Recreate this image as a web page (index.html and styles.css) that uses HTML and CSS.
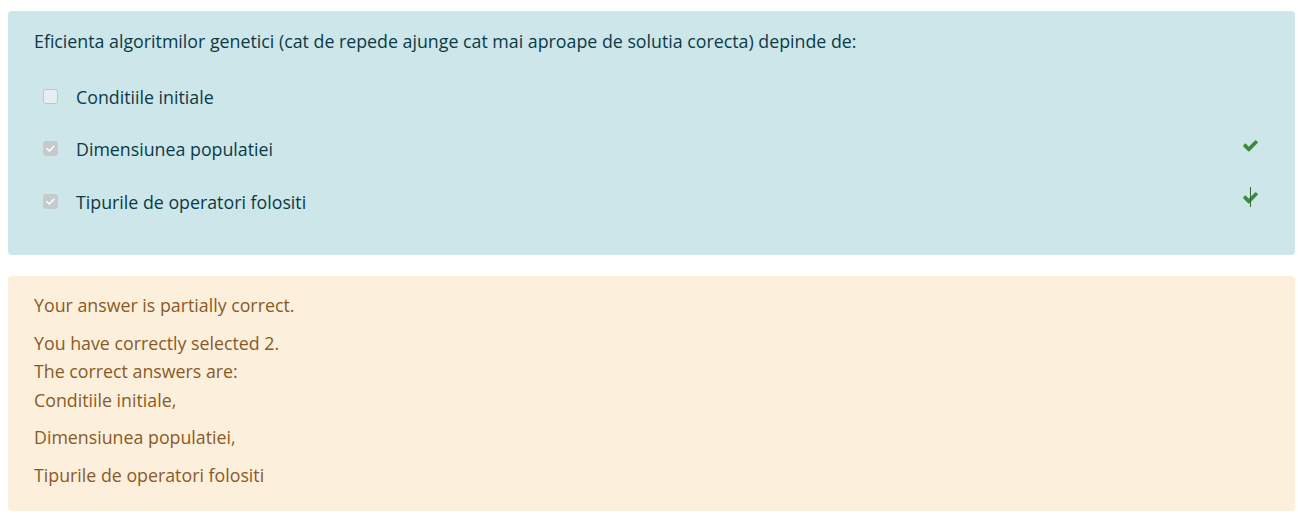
FILE: index.html
```html
<!DOCTYPE html>
<html lang="ro">
<head>
<meta charset="utf-8">
<title>Quiz review</title>
<link rel="stylesheet" href="styles.css">
</head>
<body>
<div class="page">
  <div class="formulation">
    <div class="qtext">Eficienta algoritmilor genetici (cat de repede ajunge cat mai aproape de solutia corecta) depinde de:</div>
    <div class="answers">
      <div class="row">
        <span class="cb"></span>
        <label>Conditiile initiale</label>
      </div>
      <div class="row">
        <span class="cb checked"><svg viewBox="0 0 16 16" width="15" height="15"><path d="M3.8 8.3 L6.6 11 L12.2 5.2" fill="none" stroke="#fff" stroke-width="1.9" stroke-linecap="round" stroke-linejoin="round"/></svg></span>
        <label>Dimensiunea populatiei</label>
        <span class="mark"><svg viewBox="0 0 1792 1792" width="17" height="17"><path fill="currentColor" d="M1671 566q0 40-28 68l-724 724-136 136q-28 28-68 28t-68-28l-136-136-362-362q-28-28-28-68t28-68l136-136q28-28 68-28t68 28l294 295 656-657q28-28 68-28t68 28l136 136q28 28 28 68z"/></svg></span>
      </div>
      <div class="row">
        <span class="cb checked"><svg viewBox="0 0 16 16" width="15" height="15"><path d="M3.8 8.3 L6.6 11 L12.2 5.2" fill="none" stroke="#fff" stroke-width="1.9" stroke-linecap="round" stroke-linejoin="round"/></svg></span>
        <label>Tipurile de operatori folositi</label>
        <span class="mark"><svg viewBox="0 0 1792 1792" width="17" height="17"><path fill="currentColor" d="M1671 566q0 40-28 68l-724 724-136 136q-28 28-68 28t-68-28l-136-136-362-362q-28-28-28-68t28-68l136-136q28-28 68-28t68 28l294 295 656-657q28-28 68-28t68 28l136 136q28 28 28 68z"/></svg><span class="cursor"></span></span>
      </div>
    </div>
  </div>
  <div class="outcome">
    <p>Your answer is partially correct.</p>
    <p>You have correctly selected 2.<br>The correct answers are:<br>Conditiile initiale,</p>
    <p>Dimensiunea populatiei,</p>
    <p>Tipurile de operatori folositi</p>
  </div>
</div>
</body>
</html>
```

FILE: styles.css
```css
html, body {
  margin: 0;
  padding: 0;
  background: #ffffff;
}
body {
  font-family: "Open Sans", "Noto Sans", sans-serif;
  font-size: 17.8px;
  line-height: 28.5px;
}
.page {
  padding: 11px 3px 0 8px;
  display: flex;
  flex-direction: column;
  gap: 21px;
}
.formulation {
  background: #cde6ea;
  color: #0b3a47;
  border-radius: 4px;
  padding: 16px 36px 27px 26px;
}
.qtext {
  margin-bottom: 15px;
}
.answers {
  display: flex;
  flex-direction: column;
}
.row {
  height: 52.5px;
  display: flex;
  align-items: center;
  padding-left: 9px;
}
.cb {
  flex: none;
  width: 15px;
  height: 15px;
  box-sizing: border-box;
  border-radius: 3px;
  border: 1px solid #bcc7ca;
  background: #e5eef0;
  margin-right: 18px;
  margin-top: -1px;
  display: flex;
  align-items: center;
  justify-content: center;
}
.cb.checked {
  background: #c5cbcd;
  border-color: #c5cbcd;
}
.cb svg {
  display: block;
}
.row label {
  flex: 1;
}
.mark {
  position: relative;
  color: #3d8a3b;
  display: flex;
  align-items: center;
  margin-top: -8px;
}
.cursor {
  position: absolute;
  left: 8px;
  top: -2px;
  width: 1px;
  height: 20px;
  background: #2e6b35;
}
.outcome {
  background: #fcefdc;
  color: #8a5a26;
  border-radius: 4px;
  padding: 15px 26px 14px 26px;
  height: 235px;
  box-sizing: border-box;
}
.outcome p {
  margin: 0 0 9px 0;
}
```
